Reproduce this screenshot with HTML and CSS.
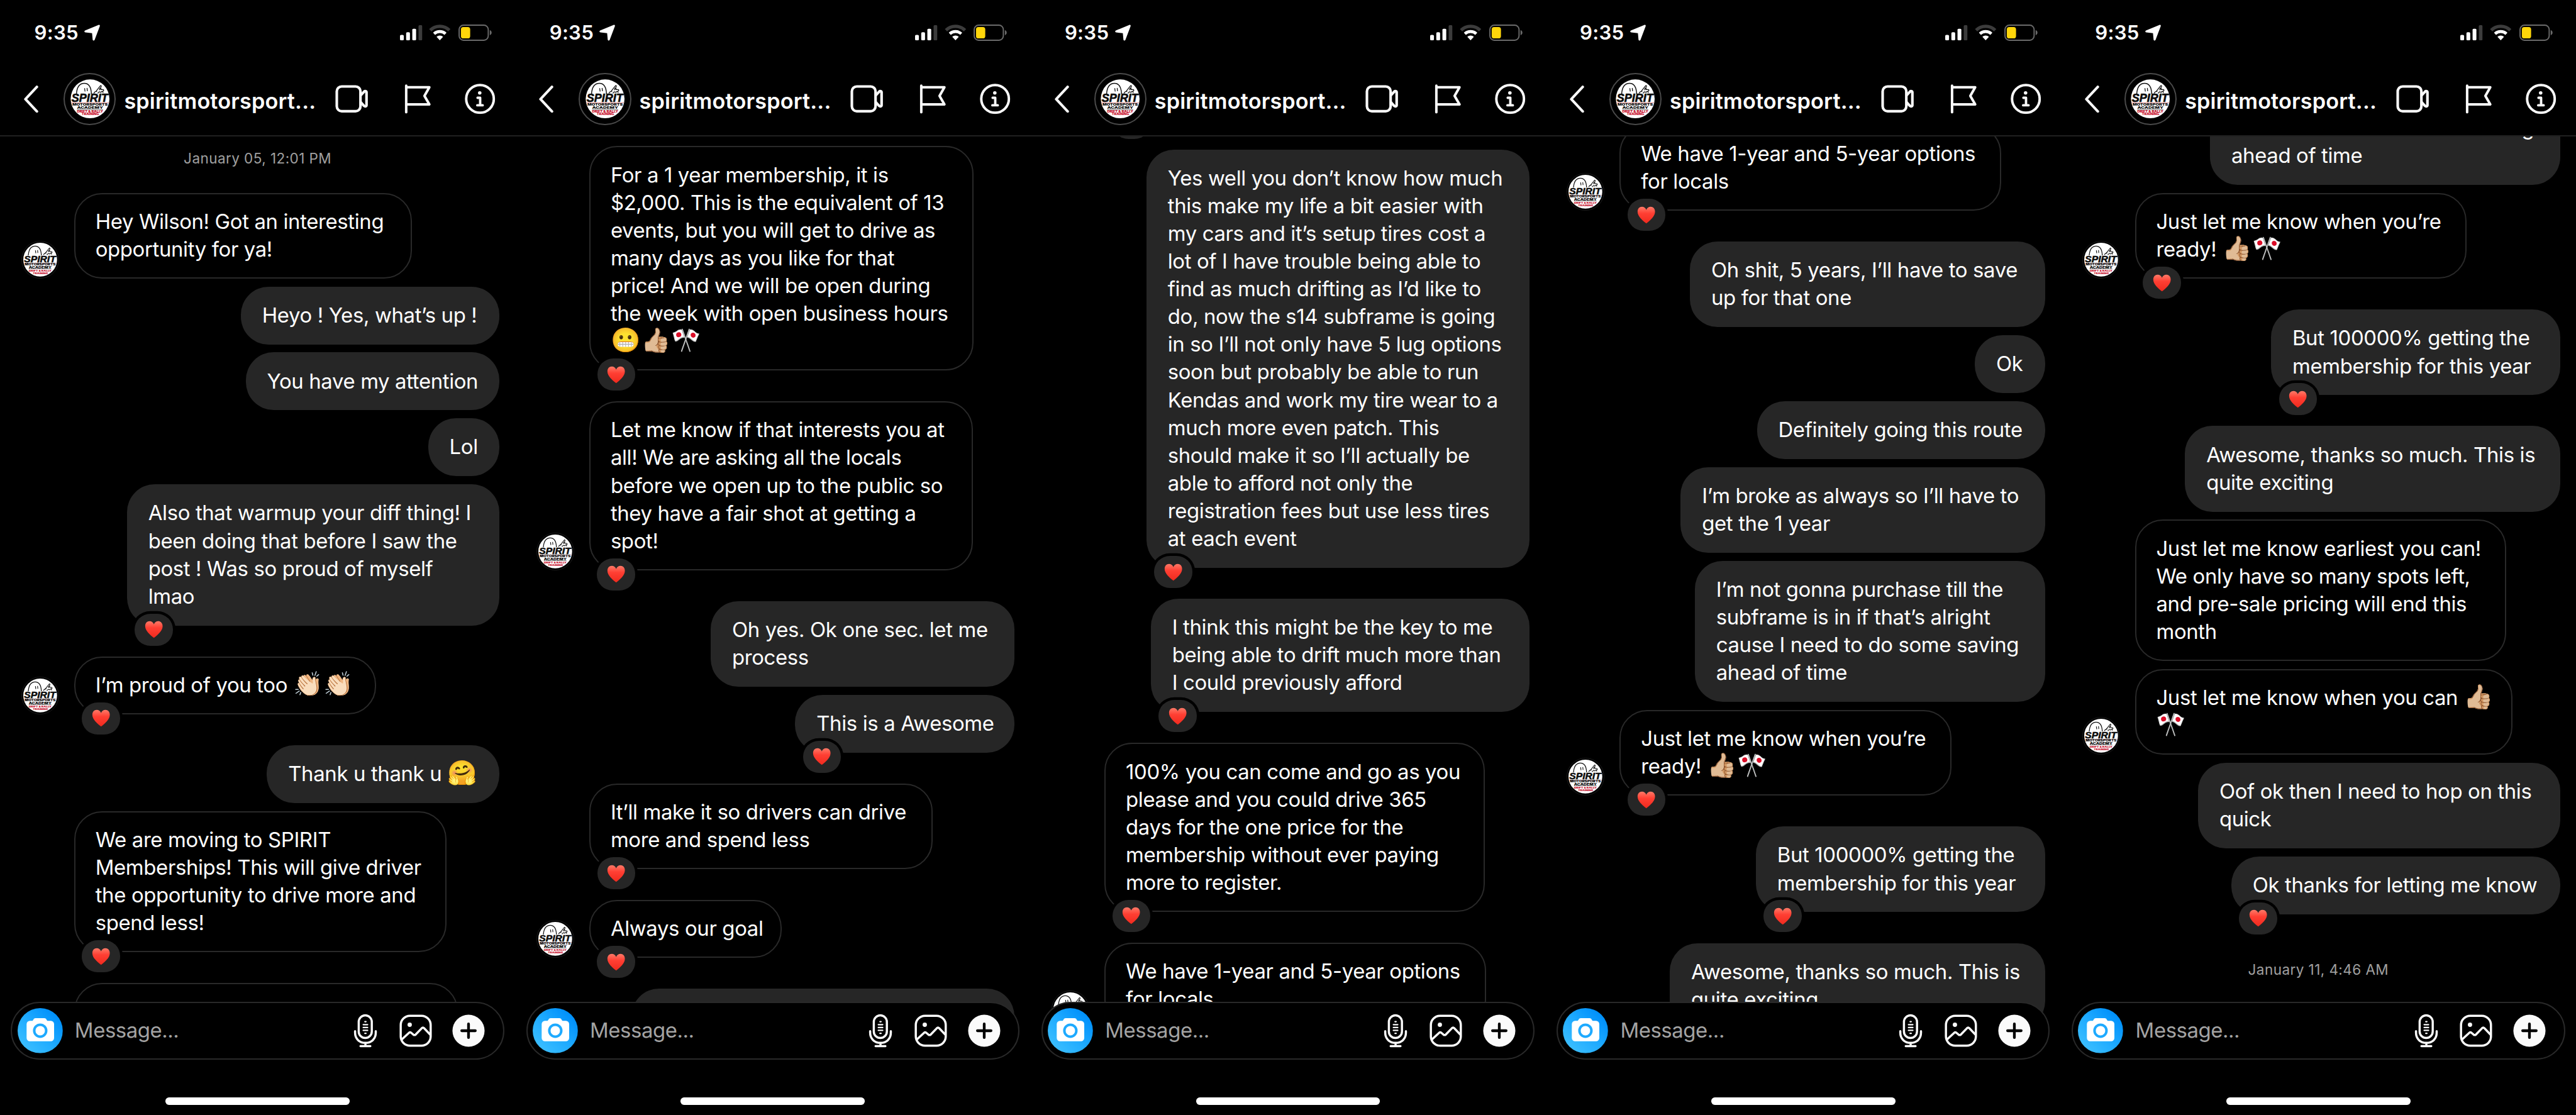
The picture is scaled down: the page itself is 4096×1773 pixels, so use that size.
FILE: index.html
```html
<!DOCTYPE html>
<html lang="en">
<head>
<meta charset="utf-8">
<title>Direct messages</title>
<link rel="stylesheet" href="styles.css">
</head>
<body>
<svg class="defs" aria-hidden="true">
  <defs>
    <linearGradient id="blue" x1="0" y1="1" x2="1" y2="0">
      <stop offset="0" stop-color="#45c5ff"/>
      <stop offset=".5" stop-color="#1eaaff"/>
      <stop offset=".85" stop-color="#0090fb"/>
    </linearGradient>
    <linearGradient id="red" x1="0" y1="0" x2="0" y2="1">
      <stop offset="0" stop-color="#ff7a68"/>
      <stop offset=".4" stop-color="#ff3f33"/>
      <stop offset="1" stop-color="#f02a1e"/>
    </linearGradient>
    <clipPath id="disc"><circle cx="36" cy="36" r="35.6"/></clipPath>
  </defs>
  <symbol id="logo" viewBox="0 0 72 72">
    <circle cx="36" cy="36" r="35.6" fill="#fff"/>
    <g clip-path="url(#disc)">
      <path d="M11 27C12 14 17 7.6 25.500 7.600C34 7.600 38 15 38.500 27" fill="none" stroke="#111" stroke-width="1.700"/>
      <path d="M26 16.500l.8 6M30.500 16l.6 6" stroke="#111" stroke-width="1.500"/>
      <path d="M43 26c1-3 3-4 6-4M47 22l8-10c1-1 2 0 1.500 1.500L53 20M53 17c2-1 4 0 3 2l4 0c2 1 1 3-1 3l1 3M50 26l3-3 3 1 2-2" fill="none" stroke="#111" stroke-width="1.500"/>
      <text x="2" y="41.800" textLength="67" lengthAdjust="spacingAndGlyphs" class="logo-name">SPIRIT</text>
      <rect x="1" y="42.800" width="70" height=".9" fill="#d77"/>
      <text x="3.500" y="48.700" textLength="65" lengthAdjust="spacingAndGlyphs" class="logo-line">MOTORSPORTS</text>
      <text x="12" y="54.300" textLength="48" lengthAdjust="spacingAndGlyphs" class="logo-line">ACADEMY</text>
      <rect x="12" y="55.400" width="48" height=".7" fill="#333"/>
      <text x="12" y="60.800" textLength="48" lengthAdjust="spacingAndGlyphs" class="logo-line logo-red">DRIFT &amp; RALLY</text>
      <text x="20.500" y="66" textLength="32" lengthAdjust="spacingAndGlyphs" class="logo-line logo-red">TRAINING</text>
    </g>
  </symbol>
  <symbol id="location" viewBox="0 0 29 30"><path d="M26 .8c1.700-.8 3 .3 2.600 2L19 28.200c-.7 1.800-3.400 1.600-3.600-.5L14.300 16 2 14.500C-.1 14.200-.4 11.900 1.400 11z" fill="#fff"/></symbol>
  <symbol id="signal" viewBox="0 0 41 28">
    <rect y="18" width="7" height="10" rx="2" fill="#fff"/><rect x="11.300" y="13" width="7" height="15" rx="2" fill="#fff"/>
    <rect x="22.600" y="6.500" width="7" height="21.500" rx="2" fill="#fff"/><rect x="34" width="7" height="28" rx="2" fill="#3c3c3c"/>
  </symbol>
  <symbol id="wifi" viewBox="0 0 40 29">
    <path d="M2.500 10.500a25 25 0 0 1 35 0" fill="none" stroke="#3c3c3c" stroke-width="6"/>
    <path d="M9.500 17a15.500 15.500 0 0 1 21 0" fill="none" stroke="#fff" stroke-width="5.500"/>
    <path d="M14 22.500a9 9 0 0 1 12 0L20 29z" fill="#fff"/>
  </symbol>
  <symbol id="battery" viewBox="0 0 62 30">
    <rect x="1.200" y="1.200" width="53.500" height="27.600" rx="8" fill="none" stroke="#6b6b6b" stroke-width="2.200"/>
    <path d="M57.500 10.500c4.500 1 4.500 8 0 9z" fill="#6b6b6b"/>
    <rect x="4.500" y="4.500" width="17" height="21" rx="4.500" fill="#ffd60a"/>
  </symbol>
  <symbol id="back" viewBox="0 0 28 50"><path d="M25 2.500L4 25l21 22.500" fill="none" stroke="#fafafa" stroke-width="4.800" stroke-linecap="round" stroke-linejoin="round"/></symbol>
  <symbol id="video" viewBox="0 0 60 52">
    <g fill="none" stroke="#fafafa" stroke-width="4.800" stroke-linejoin="round">
      <rect x="2.900" y="2.900" width="43.500" height="45.500" rx="9"/>
      <path d="M46.500 19.500l6.500-7c1.800-1.800 4.500-1 4.500 1.500v23c0 2.500-2.700 3.300-4.500 1.500l-6.500-7"/>
    </g>
  </symbol>
  <symbol id="flag" viewBox="0 0 50 54"><path d="M4.500 2.500v49M4.500 5.500h42.500l-9 15.800 9 15.700h-42.500" fill="none" stroke="#fafafa" stroke-width="4.600" stroke-linecap="round" stroke-linejoin="round"/></symbol>
  <symbol id="info" viewBox="0 0 56 56">
    <circle cx="28" cy="28" r="25.400" fill="none" stroke="#fafafa" stroke-width="4.600"/>
    <circle cx="27.500" cy="17" r="3.200" fill="#fafafa"/>
    <path d="M23.500 26h4.800v13.500M23 39.800h10" fill="none" stroke="#fafafa" stroke-width="4.400" stroke-linecap="round" stroke-linejoin="round"/>
  </symbol>
  <symbol id="camera" viewBox="0 0 83 83">
    <circle cx="41.500" cy="41.500" r="41.500" fill="url(#blue)"/>
    <path d="M33 18.500h16c2 0 3 1 4 2.500l1.500 2.500h6.500a6 6 0 0 1 6 6v25.500a6 6 0 0 1-6 6h-38.500a6 6 0 0 1-6-6v-25.500a6 6 0 0 1 6-6h5l1.500-2.500c1-1.500 2-2.500 4-2.500z" fill="#fff"/>
    <circle cx="41.500" cy="41.500" r="11" fill="#fff" stroke="#1eaaff" stroke-width="4.600"/>
  </symbol>
  <symbol id="mic" viewBox="0 0 44 62">
    <g fill="none" stroke="#fafafa" stroke-linecap="round">
      <rect x="9.700" y="3" width="24" height="41.500" rx="12" stroke-width="4"/>
      <path d="M3 32v3c0 11 8 18.500 19 18.500S41 46 41 35v-3M22 54v5M13 59.500h18" stroke-width="4"/>
      <path d="M21 14.500h2M18 20h8M18 25.300h8M18 30.600h8M21 36h2" stroke-width="2.600"/>
    </g>
  </symbol>
  <symbol id="photo" viewBox="0 0 60 60">
    <g fill="none" stroke="#fafafa" stroke-width="4" stroke-linejoin="round">
      <rect x="2.500" y="2.500" width="55" height="55" rx="17"/>
      <path d="M4 46.500l13.500-12.500c1.500-1.400 3-1.300 4.500 0l3.500 3c1.500 1.200 3 1.200 4.500 0L41 25.500c1.500-1.500 3-1.500 4.500 0L57 37.500"/>
    </g>
    <circle cx="19" cy="19" r="4" fill="#fafafa"/>
  </symbol>
  <symbol id="plus" viewBox="0 0 60 60">
    <circle cx="30" cy="30" r="29.500" fill="#fafafa"/>
    <path d="M30 17.500v25M17.500 30h25" stroke="#000" stroke-width="5" stroke-linecap="round"/>
  </symbol>
  <symbol id="heart" viewBox="0 0 34 32"><path d="M17 31.500C10 26 1 18.500 1 10 1 4.500 4.500 1 9 1c3.500 0 6.500 2 8 5.500C18.500 3 21.500 1 25 1c4.500 0 8 3.500 8 9 0 8.500-9 16-16 21.500z" fill="url(#red)"/></symbol>
</svg>

<main class="board">
  <section class="phone">
    <header class="top">
      <div class="status"><span class="clock">9:35</span><svg class="i-location"><use href="#location"/></svg><svg class="i-signal"><use href="#signal"/></svg><svg class="i-wifi"><use href="#wifi"/></svg><svg class="i-battery"><use href="#battery"/></svg></div>
      <div class="nav"><svg class="i-back"><use href="#back"/></svg><span class="ring"><svg class="i-logo"><use href="#logo"/></svg></span><h1 class="name">spiritmotorsport...</h1><svg class="i-video"><use href="#video"/></svg><svg class="i-flag"><use href="#flag"/></svg><svg class="i-info"><use href="#info"/></svg></div>
    </header>
    <div class="thread">
      <time class="date date-first">January 05, 12:01 PM</time>
      <div class="row in with-avatar"><svg class="avatar"><use href="#logo"/></svg><p class="bubble" style="--w:620">Hey Wilson! Got an interesting<br>opportunity for ya!</p></div>
      <div class="row out"><p class="bubble" style="--w:475">Heyo ! Yes, what’s up !</p></div>
      <div class="row out"><p class="bubble" style="--w:466">You have my attention</p></div>
      <div class="row out"><p class="bubble" style="--w:131">Lol</p></div>
      <div class="row out liked"><p class="bubble" style="--w:684">Also that warmup your diff thing! I<br>been doing that before I saw the<br>post ! Was so proud of myself<br>lmao<span class="like"><svg><use href="#heart"/></svg></span></p></div>
      <div class="row in with-avatar liked"><svg class="avatar"><use href="#logo"/></svg><p class="bubble" style="--w:555">I’m proud of you too <span class="emoji">👏🏻</span><span class="emoji">👏🏻</span><span class="like"><svg><use href="#heart"/></svg></span></p></div>
      <div class="row out"><p class="bubble" style="--w:427">Thank u thank u <span class="emoji">🤗</span></p></div>
      <div class="row in liked"><p class="bubble" style="--w:684">We are moving to SPIRIT<br>Memberships! This will give driver<br>the opportunity to drive more and<br>spend less!<span class="like"><svg><use href="#heart"/></svg></span></p></div>
      <div class="row in"><p class="bubble" style="--w:705"></p></div>
    </div>
    <footer class="bottom">
      <div class="composer"><svg class="i-camera"><use href="#camera"/></svg><span class="placeholder">Message...</span><svg class="i-mic"><use href="#mic"/></svg><svg class="i-photo"><use href="#photo"/></svg><svg class="i-plus"><use href="#plus"/></svg></div>
      <div class="home"></div>
    </footer>
  </section>

  <section class="phone">
    <header class="top">
      <div class="status"><span class="clock">9:35</span><svg class="i-location"><use href="#location"/></svg><svg class="i-signal"><use href="#signal"/></svg><svg class="i-wifi"><use href="#wifi"/></svg><svg class="i-battery"><use href="#battery"/></svg></div>
      <div class="nav"><svg class="i-back"><use href="#back"/></svg><span class="ring"><svg class="i-logo"><use href="#logo"/></svg></span><h1 class="name">spiritmotorsport...</h1><svg class="i-video"><use href="#video"/></svg><svg class="i-flag"><use href="#flag"/></svg><svg class="i-info"><use href="#info"/></svg></div>
    </header>
    <div class="thread" style="--scroll:17.5">
      <div class="row in liked"><p class="bubble" style="--w:706">For a 1 year membership, it is<br>$2,000. This is the equivalent of 13<br>events, but you will get to drive as<br>many days as you like for that<br>price! And we will be open during<br>the week with open business hours<br><span class="emoji">😬</span><span class="emoji">👍🏼</span><span class="emoji">🎌</span><span class="like"><svg><use href="#heart"/></svg></span></p></div>
      <div class="row in with-avatar liked"><svg class="avatar"><use href="#logo"/></svg><p class="bubble" style="--w:704">Let me know if that interests you at<br>all! We are asking all the locals<br>before we open up to the public so<br>they have a fair shot at getting a<br>spot!<span class="like"><svg><use href="#heart"/></svg></span></p></div>
      <div class="row out"><p class="bubble" style="--w:558">Oh yes. Ok one sec. let me<br>process</p></div>
      <div class="row out liked"><p class="bubble" style="--w:403">This is a Awesome<span class="like"><svg><use href="#heart"/></svg></span></p></div>
      <div class="row in liked"><p class="bubble" style="--w:631">It’ll make it so drivers can drive<br>more and spend less<span class="like"><svg><use href="#heart"/></svg></span></p></div>
      <div class="row in with-avatar liked"><svg class="avatar"><use href="#logo"/></svg><p class="bubble" style="--w:354">Always our goal<span class="like"><svg><use href="#heart"/></svg></span></p></div>
      <div class="row out"><p class="bubble" style="--w:704"></p></div>
    </div>
    <footer class="bottom">
      <div class="composer"><svg class="i-camera"><use href="#camera"/></svg><span class="placeholder">Message...</span><svg class="i-mic"><use href="#mic"/></svg><svg class="i-photo"><use href="#photo"/></svg><svg class="i-plus"><use href="#plus"/></svg></div>
      <div class="home"></div>
    </footer>
  </section>

  <section class="phone">
    <header class="top">
      <div class="status"><span class="clock">9:35</span><svg class="i-location"><use href="#location"/></svg><svg class="i-signal"><use href="#signal"/></svg><svg class="i-wifi"><use href="#wifi"/></svg><svg class="i-battery"><use href="#battery"/></svg></div>
      <div class="nav"><svg class="i-back"><use href="#back"/></svg><span class="ring"><svg class="i-logo"><use href="#logo"/></svg></span><h1 class="name">spiritmotorsport...</h1><svg class="i-video"><use href="#video"/></svg><svg class="i-flag"><use href="#flag"/></svg><svg class="i-info"><use href="#info"/></svg></div>
    </header>
    <div class="thread" style="--scroll:-139.6">
      <div class="row in liked"><p class="bubble" style="--w:354"><span class="like"><svg><use href="#heart"/></svg></span></p></div>
      <div class="row out liked"><p class="bubble" style="--w:704">Yes well you don’t know how much<br>this make my life a bit easier with<br>my cars and it’s setup tires cost a<br>lot of I have trouble being able to<br>find as much drifting as I’d like to<br>do, now the s14 subframe is going<br>in so I’ll not only have 5 lug options<br>soon but probably be able to run<br>Kendas and work my tire wear to a<br>much more even patch. This<br>should make it so I’ll actually be<br>able to afford not only the<br>registration fees but use less tires<br>at each event<span class="like"><svg><use href="#heart"/></svg></span></p></div>
      <div class="row out liked"><p class="bubble" style="--w:696">I think this might be the key to me<br>being able to drift much more than<br>I could previously afford<span class="like"><svg><use href="#heart"/></svg></span></p></div>
      <div class="row in liked"><p class="bubble" style="--w:699">100% you can come and go as you<br>please and you could drive 365<br>days for the one price for the<br>membership without ever paying<br>more to register.<span class="like"><svg><use href="#heart"/></svg></span></p></div>
      <div class="row in with-avatar"><svg class="avatar"><use href="#logo"/></svg><p class="bubble" style="--w:701">We have 1-year and 5-year options<br>for locals</p></div>
    </div>
    <footer class="bottom">
      <div class="composer"><svg class="i-camera"><use href="#camera"/></svg><span class="placeholder">Message...</span><svg class="i-mic"><use href="#mic"/></svg><svg class="i-photo"><use href="#photo"/></svg><svg class="i-plus"><use href="#plus"/></svg></div>
      <div class="home"></div>
    </footer>
  </section>

  <section class="phone">
    <header class="top">
      <div class="status"><span class="clock">9:35</span><svg class="i-location"><use href="#location"/></svg><svg class="i-signal"><use href="#signal"/></svg><svg class="i-wifi"><use href="#wifi"/></svg><svg class="i-battery"><use href="#battery"/></svg></div>
      <div class="nav"><svg class="i-back"><use href="#back"/></svg><span class="ring"><svg class="i-logo"><use href="#logo"/></svg></span><h1 class="name">spiritmotorsport...</h1><svg class="i-video"><use href="#video"/></svg><svg class="i-flag"><use href="#flag"/></svg><svg class="i-info"><use href="#info"/></svg></div>
    </header>
    <div class="thread" style="--scroll:-21.3">
      <div class="row in with-avatar liked"><svg class="avatar"><use href="#logo"/></svg><p class="bubble" style="--w:701">We have 1-year and 5-year options<br>for locals<span class="like"><svg><use href="#heart"/></svg></span></p></div>
      <div class="row out"><p class="bubble" style="--w:652">Oh shit, 5 years, I’ll have to save<br>up for that one</p></div>
      <div class="row out"><p class="bubble" style="--w:129">Ok</p></div>
      <div class="row out"><p class="bubble" style="--w:529">Definitely going this route</p></div>
      <div class="row out"><p class="bubble" style="--w:669">I’m broke as always so I’ll have to<br>get the 1 year</p></div>
      <div class="row out"><p class="bubble" style="--w:643">I’m not gonna purchase till the<br>subframe is in if that’s alright<br>cause I need to do some saving<br>ahead of time</p></div>
      <div class="row in with-avatar liked"><svg class="avatar"><use href="#logo"/></svg><p class="bubble" style="--w:609">Just let me know when you’re<br>ready! <span class="emoji">👍🏼</span><span class="emoji">🎌</span><span class="like"><svg><use href="#heart"/></svg></span></p></div>
      <div class="row out liked"><p class="bubble" style="--w:531">But 100000% getting the<br>membership for this year<span class="like"><svg><use href="#heart"/></svg></span></p></div>
      <div class="row out"><p class="bubble" style="--w:689">Awesome, thanks so much. This is<br>quite exciting</p></div>
    </div>
    <footer class="bottom">
      <div class="composer"><svg class="i-camera"><use href="#camera"/></svg><span class="placeholder">Message...</span><svg class="i-mic"><use href="#mic"/></svg><svg class="i-photo"><use href="#photo"/></svg><svg class="i-plus"><use href="#plus"/></svg></div>
      <div class="home"></div>
    </footer>
  </section>

  <section class="phone">
    <header class="top">
      <div class="status"><span class="clock">9:35</span><svg class="i-location"><use href="#location"/></svg><svg class="i-signal"><use href="#signal"/></svg><svg class="i-wifi"><use href="#wifi"/></svg><svg class="i-battery"><use href="#battery"/></svg></div>
      <div class="nav"><svg class="i-back"><use href="#back"/></svg><span class="ring"><svg class="i-logo"><use href="#logo"/></svg></span><h1 class="name">spiritmotorsport...</h1><svg class="i-video"><use href="#video"/></svg><svg class="i-flag"><use href="#flag"/></svg><svg class="i-info"><use href="#info"/></svg></div>
    </header>
    <div class="thread" style="--scroll:-68.4">
      <div class="row out"><p class="bubble" style="--w:643">cause I need to do some saving<br>ahead of time</p></div>
      <div class="row in with-avatar liked"><svg class="avatar"><use href="#logo"/></svg><p class="bubble" style="--w:609">Just let me know when you’re<br>ready! <span class="emoji">👍🏼</span><span class="emoji">🎌</span><span class="like"><svg><use href="#heart"/></svg></span></p></div>
      <div class="row out liked"><p class="bubble" style="--w:531">But 100000% getting the<br>membership for this year<span class="like"><svg><use href="#heart"/></svg></span></p></div>
      <div class="row out"><p class="bubble" style="--w:689">Awesome, thanks so much. This is<br>quite exciting</p></div>
      <div class="row in"><p class="bubble" style="--w:682">Just let me know earliest you can!<br>We only have so many spots left,<br>and pre-sale pricing will end this<br>month</p></div>
      <div class="row in with-avatar"><svg class="avatar"><use href="#logo"/></svg><p class="bubble" style="--w:694">Just let me know when you can <span class="emoji">👍🏼</span><br><span class="emoji">🎌</span></p></div>
      <div class="row out"><p class="bubble" style="--w:665">Oof ok then I need to hop on this<br>quick</p></div>
      <div class="row out liked"><p class="bubble" style="--w:604">Ok thanks for letting me know<span class="like"><svg><use href="#heart"/></svg></span></p></div>
      <time class="date date-last">January 11, 4:46 AM</time>
    </div>
    <footer class="bottom">
      <div class="composer"><svg class="i-camera"><use href="#camera"/></svg><span class="placeholder">Message...</span><svg class="i-mic"><use href="#mic"/></svg><svg class="i-photo"><use href="#photo"/></svg><svg class="i-plus"><use href="#plus"/></svg></div>
      <div class="home"></div>
    </footer>
  </section>
</main>
</body>
</html>
```
FILE: styles.css
```css
/* 473rem spans the full width of the five screens */
html { font-size: calc(100vw / 473); }
* { box-sizing: border-box; }
body { margin: 0; background: #000; color: #fff; font-family: Inter, "Liberation Sans", sans-serif; overflow: hidden; }
svg { display: block; flex: none; overflow: visible; }
.defs { position: absolute; width: 0; height: 0; }

.board { display: grid; grid-template-columns: repeat(5, 94.6rem); height: 100vh; }
.phone { display: flex; flex-direction: column; height: 100vh; overflow: hidden; }

/* header */
.top { height: 25.1rem; flex: none; border-bottom: .25rem solid #202020; }
.status { display: flex; align-items: center; height: 12rem; padding-left: 6.3rem; padding-right: 4.2rem; }
.clock { flex: none; width: 9.2rem; font-size: 3.6rem; font-weight: 600; letter-spacing: .03rem; line-height: 4rem; }
.i-location { width: 2.9rem; height: 3rem; margin-right: auto; }
.i-signal { width: 4.1rem; height: 2.8rem; }
.i-wifi { width: 4rem; height: 2.9rem; margin-left: 1.3rem; }
.i-battery { width: 6.2rem; height: 3rem; margin-left: 1.4rem; }
.nav { display: flex; align-items: center; height: 12.4rem; padding-left: 4.3rem; }
.i-back { width: 2.8rem; height: 5rem; margin-right: 4.6rem; }
.ring { display: grid; place-items: center; width: 9.6rem; height: 9.6rem; border: .3rem solid #4a4a4a; border-radius: 50%; flex: none; }
.i-logo { width: 7.2rem; height: 7.2rem; }
.name { margin: 0 0 0 1.5rem; width: 38.75rem; flex: none; font-size: 3.95rem; font-weight: 600; letter-spacing: .02rem; line-height: 5rem; padding-top: .6rem; white-space: nowrap; }
.i-video { width: 6rem; height: 5.2rem; }
.i-flag { width: 5rem; height: 5.4rem; margin-left: 6.6rem; }
.i-info { width: 5.6rem; height: 5.6rem; margin-left: 6.2rem; }

/* messages */
.thread { flex: 1; min-height: 0; overflow: hidden; display: flex; flex-direction: column; }
.thread > :first-child { margin-top: calc(var(--scroll, 0) * .1rem); }
.date { align-self: center; flex: none; color: #a0a0a0; font-size: 2.6rem; line-height: 3.2rem; letter-spacing: .05rem; white-space: nowrap; }
.thread > .date-first { margin: 2.4rem 0 4.7rem; }
.date-last { margin-top: 2.95rem; }
.row { display: flex; align-items: flex-end; flex: none; margin-bottom: 1.49rem; }
.row.liked { margin-bottom: 5.67rem; }
.in { padding-left: 13.6rem; }
.in.with-avatar { padding-left: 3.9rem; gap: 2.8rem; }
.out { justify-content: flex-end; padding-right: 2.9rem; }
.avatar { width: 6.9rem; height: 6.9rem; padding: .2rem; border: .2rem solid #1c1c1c; border-radius: 50%; }
.bubble { position: relative; margin: 0; width: calc(var(--w) * .1rem); min-height: 10.63rem; padding: 2.67rem 0 2.86rem 3.92rem; border-radius: 5.1rem; font-size: 3.8rem; line-height: 5.094rem; letter-spacing: -.042rem; white-space: nowrap; }
.out .bubble { background: #262626; }
.in .bubble::before { content: ""; position: absolute; inset: 0; border: .3rem solid #292929; border-radius: inherit; }
.emoji { display: inline-block; width: 5.55rem; height: 3rem; font: 4.4rem/3rem "Noto Color Emoji", sans-serif; letter-spacing: 0; }
.like { position: absolute; left: 1.45rem; bottom: -3.7rem; display: grid; place-items: center; width: 7rem; height: 5.9rem; background: #262626; border-radius: 2.9rem; box-shadow: 0 0 0 .5rem #000; }
.like svg { width: 3.4rem; height: 3.2rem; }

/* composer */
.bottom { flex: none; height: 20.8rem; margin-top: -10.6rem; position: relative; display: flex; flex-direction: column; align-items: center; }
.composer { width: 90.6rem; height: 10.6rem; display: flex; align-items: center; background: #000; border: .3rem solid #292929; border-radius: 5.3rem; padding-left: .95rem; }
.i-camera { width: 8.3rem; height: 8.3rem; }
.placeholder { width: 51.1rem; flex: none; padding-left: 2.25rem; color: #a3a3a3; font-size: 3.8rem; letter-spacing: -.05rem; line-height: 5rem; }
.i-mic { width: 4.4rem; height: 6.2rem; margin-left: 2.3rem; }
.i-photo { width: 6rem; height: 6rem; margin-left: 4rem; }
.i-plus { width: 6rem; height: 6rem; margin-left: 3.8rem; }
.home { width: 33.8rem; height: 1.3rem; margin-top: 7rem; background: #fff; border-radius: .65rem; }

/* lettering inside the round logo */
.logo-name { font: italic 900 20.500px "Liberation Sans", sans-serif; fill: #0b0b0b; stroke: #0b0b0b; stroke-width: .7px; }
.logo-line { font: 900 5.600px Inter, sans-serif; fill: #0b0b0b; }
.logo-red { fill: #c8102e; font-size: 4.800px; }
```
